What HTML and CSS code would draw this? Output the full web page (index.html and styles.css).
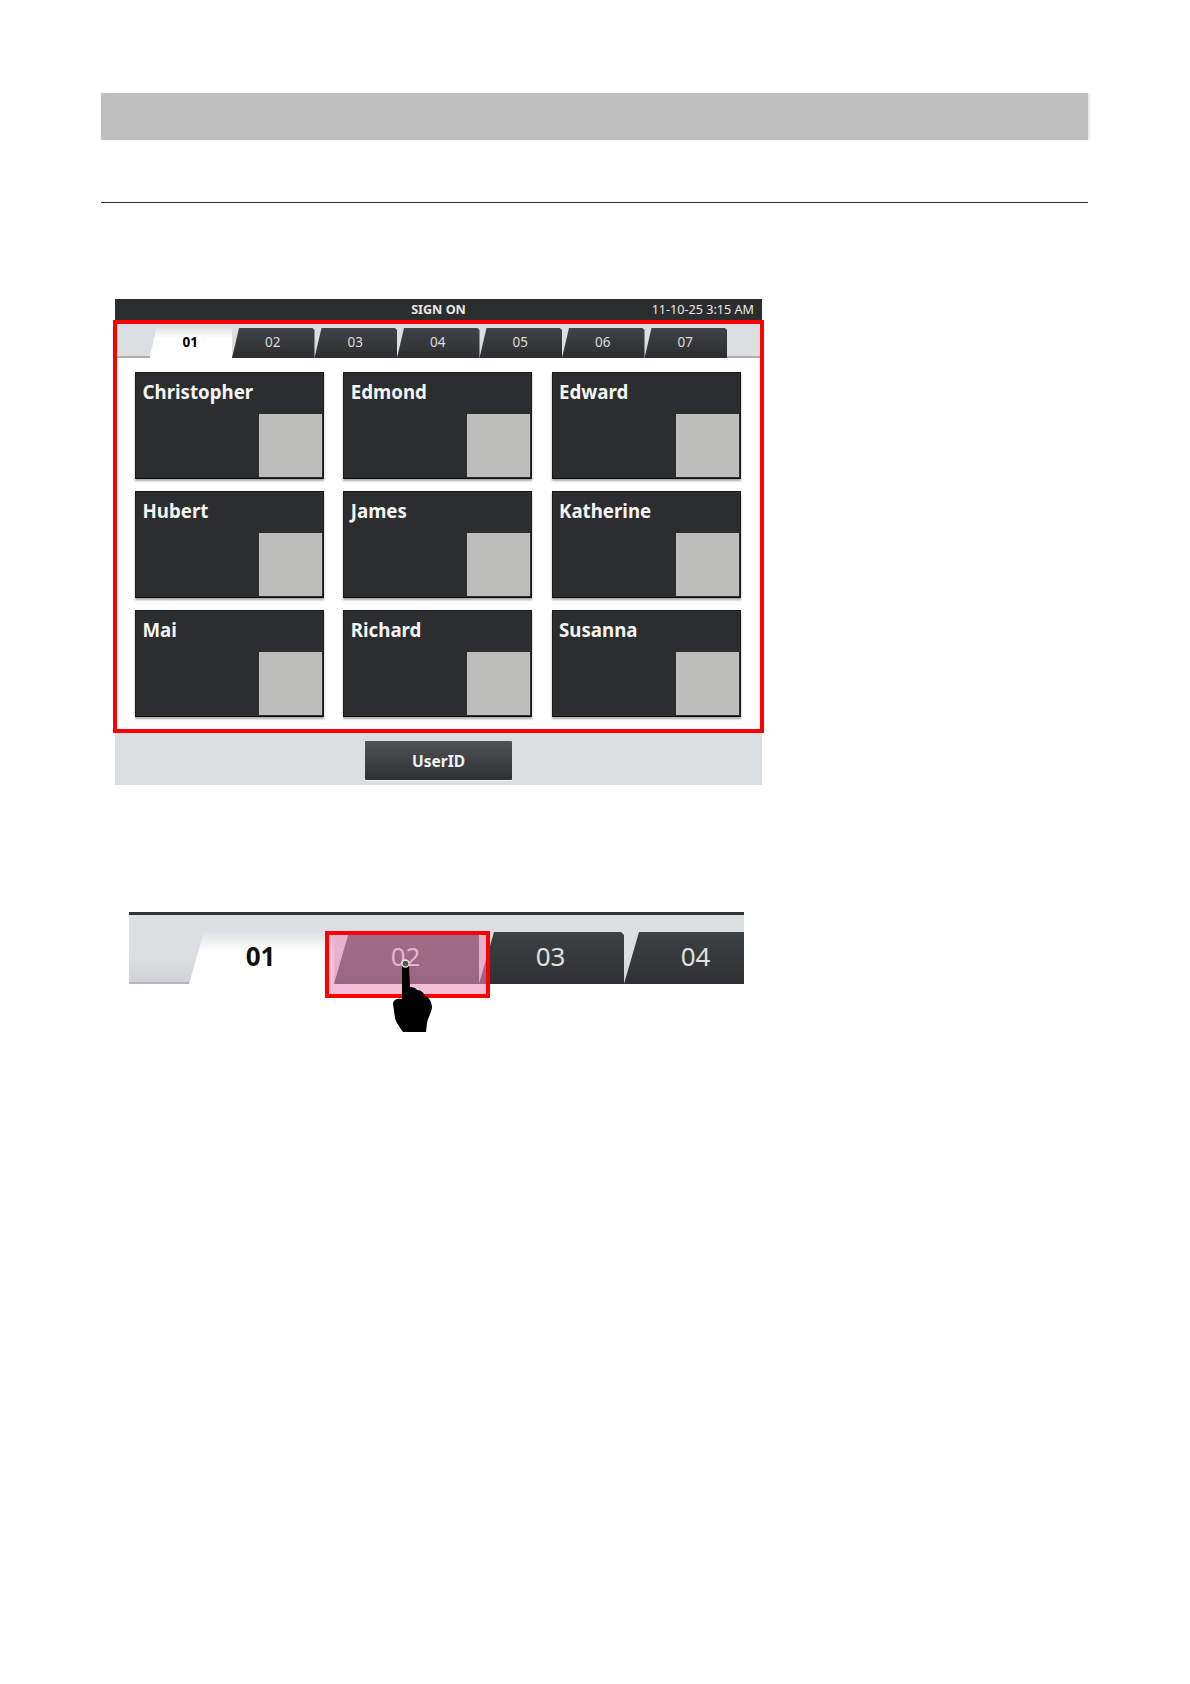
FILE: index.html
```html
<!DOCTYPE html>
<html lang="en">
<head>
<meta charset="utf-8">
<title>Sign On</title>
<link rel="stylesheet" href="styles.css">
</head>
<body>
<main class="page">
  <div class="band"></div>
  <hr class="rule">

  <section class="screen">
    <header class="topbar">
      <span></span>
      <span class="topbar-title">SIGN ON</span>
      <span class="topbar-time">11-10-25 3:15 AM</span>
    </header>
    <div class="frame">
      <nav class="tabs">
        <span class="tab tab-active">01</span>
        <span class="tab">02</span>
        <span class="tab">03</span>
        <span class="tab">04</span>
        <span class="tab">05</span>
        <span class="tab">06</span>
        <span class="tab">07</span>
      </nav>
      <div class="users">
        <div class="card"><span class="card-name">Christopher</span><span class="card-photo"></span></div>
        <div class="card"><span class="card-name">Edmond</span><span class="card-photo"></span></div>
        <div class="card"><span class="card-name">Edward</span><span class="card-photo"></span></div>
        <div class="card"><span class="card-name">Hubert</span><span class="card-photo"></span></div>
        <div class="card"><span class="card-name">James</span><span class="card-photo"></span></div>
        <div class="card"><span class="card-name">Katherine</span><span class="card-photo"></span></div>
        <div class="card"><span class="card-name">Mai</span><span class="card-photo"></span></div>
        <div class="card"><span class="card-name">Richard</span><span class="card-photo"></span></div>
        <div class="card"><span class="card-name">Susanna</span><span class="card-photo"></span></div>
      </div>
    </div>
    <footer class="bottombar"><span class="userid">UserID</span></footer>
  </section>

  <section class="detail">
    <nav class="detail-tabs">
      <span class="dtab dtab-active">01</span>
      <span class="dtab dtab-hit">02</span>
      <span class="dtab">03</span>
      <span class="dtab">04</span>
    </nav>
    <div class="highlight"></div>
    <svg class="hand" viewBox="0 0 44 78" width="44" height="78" aria-hidden="true">
      <path d="M10 8 C10 3 17 3 17 8 L18 30 C21 30 24 31 25 33 C29 33 32 36 33 39 C37 40 40 45 40 51 C39 56 36 61 35 66 L34 75 L11 75 C8 70 4 66 3 61 L1 47 C1 43 5 41 10 42 Z" fill="#000"/>
      <circle cx="13.500" cy="6.500" r="3.500" fill="#555" stroke="#efe8ec" stroke-width="1.300"/>
    </svg>
  </section>
</main>
</body>
</html>
```
FILE: styles.css
```css
* { box-sizing: border-box; }
html, body { margin: 0; padding: 0; background: #fff; }
body { font-family: "Noto Sans", "Open Sans", sans-serif; }
.page { width: 1190px; height: 1684px; padding: 93px 0 0 101px; overflow: hidden; }

.band { width: 987px; height: 47px; background: #bfbfbf; box-shadow: 2px 0 3px -1px #dcdcdc; }
.rule { width: 987px; height: 1px; margin: 62px 0 0; border: 0; background: #333; }

.screen { width: 647px; margin: 96px 0 0 14px; }
.topbar { height: 21px; display: grid; grid-template-columns: 1fr auto 1fr; align-items: center; padding: 0 8px; background: #2b2d2f; color: #e9e9e9; font-size: 12.600px; white-space: nowrap; }
.topbar-title { font-weight: 700; }
.topbar-time { justify-self: end; }

.frame { margin: 0 -2px; border: 4px solid #f00; background: #fff; }
.tabs { height: 34px; padding: 4px 0 0 32.500px; display: flex; background: #dcdfe1; border-bottom: 2px solid #aeb0b1; }
.tab { width: 82.500px; height: 30px; flex: none; display: flex; align-items: center; justify-content: center; padding: 0 1px 2px 0; background: linear-gradient(#404345, #2c2e30); color: #ddd; font-size: 13.500px; clip-path: polygon(7px 0, calc(100% - 2px) 0, 100% 2px, 100% 100%, 0 100%); }
.tab-active { background: linear-gradient(#e2e5e6, #fff 35%); color: #000; font-weight: 700; }

.users { padding: 14px 0 12px 18px; display: grid; grid-template-columns: repeat(3, 189px); grid-auto-rows: 107px; column-gap: 19.250px; row-gap: 12px; }
.card { display: flex; flex-direction: column; justify-content: space-between; padding: 6px 1px 1px 6.500px; background: #2b2d2e; border: 1px solid #1a1b1c; border-bottom-color: #0c0c0c; box-shadow: 0 2px 2px #aaa; }
.card-name { color: #f4f4f4; font-size: 18.700px; font-weight: 700; line-height: 26px; }
.card-photo { width: 63px; height: 63px; align-self: flex-end; background: #bdbdbc; }

.bottombar { height: 52px; display: flex; justify-content: center; padding-top: 8px; background: #dcdfe1; }
.userid { width: 147px; height: 39px; display: flex; align-items: center; justify-content: center; padding-top: 1px; background: linear-gradient(#505355, #2e3032); border-radius: 1px; box-shadow: 0 1px 1px #f2f3f4; color: #f0f0f0; font-size: 15.500px; font-weight: 700; }

.detail { position: relative; width: 615px; height: 72px; margin: 127px 0 0 28px; }
.detail-tabs { height: 72px; padding: 17px 0 0 60px; display: flex; overflow: hidden; background: linear-gradient(#dcdfe1 60%, #cfd2d4); border-top: 3px solid #333; box-shadow: inset 0 -2px 0 #b5b7b8; }
.dtab { width: 145px; height: 52px; flex: none; display: flex; align-items: center; justify-content: center; padding: 0 2px 5px 0; background: linear-gradient(#3e4143, #2e3032); color: #e0e0e0; font-size: 26px; clip-path: polygon(15px 0, calc(100% - 3px) 0, 100% 3px, 100% 100%, 0 100%); }
.dtab-active { background: linear-gradient(#e0e3e4, #fff 40%); color: #111; font-weight: 700; }

.highlight { position: absolute; left: 196px; top: 19px; width: 165px; height: 67px; border: 4px solid #f00; background: rgba(237, 142, 186, .57); }
.hand { position: absolute; left: 263px; top: 45px; }
```
